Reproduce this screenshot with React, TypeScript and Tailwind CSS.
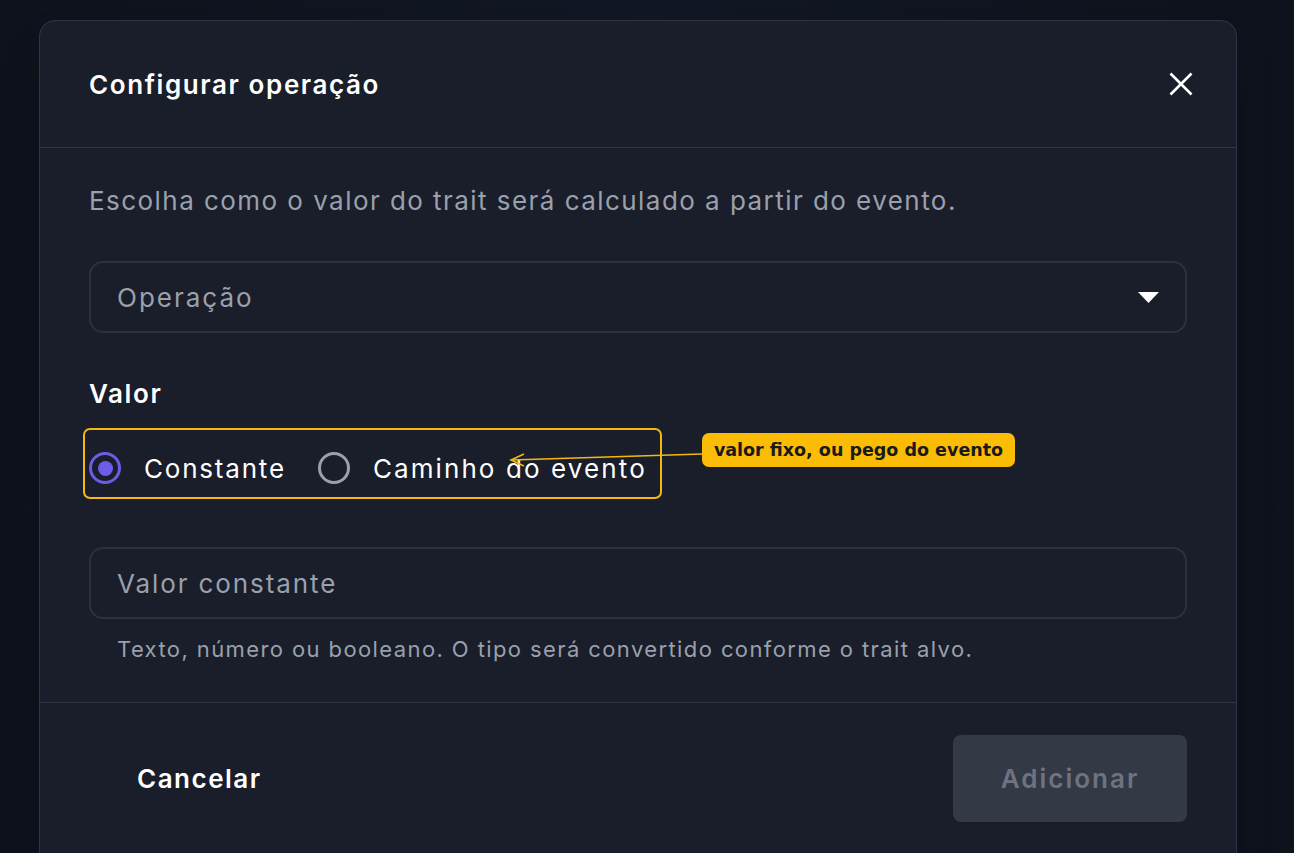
import { useState } from 'react';

const FONT = { fontFamily: 'Inter, "Open Sans", sans-serif' };

function Radio({ checked }: { checked: boolean }) {
  return checked ? (
    <span className="flex h-[32px] w-[32px] items-center justify-center rounded-full border-[3px] border-[#6c5ce7]">
      <span className="h-[15px] w-[15px] rounded-full bg-[#6c5ce7]" />
    </span>
  ) : (
    <span className="h-[32px] w-[32px] rounded-full border-[3px] border-[#9ca0ab]" />
  );
}

export default function App() {
  const [mode, setMode] = useState<'const' | 'path'>('const');

  return (
    <div
      className="relative h-[853px] w-full overflow-hidden bg-gradient-to-r from-[#0e121c] via-[#121725] to-[#0e121c]"
      style={FONT}
    >
      <div className="ml-[39px] mt-[20px] h-[860px] w-[1198px] rounded-[16px] border border-[#2f3544] bg-[#191e2a] shadow-2xl">
        {/* header */}
        <div className="flex h-[127px] items-center justify-between border-b border-[#2f3544] pl-[49px] pr-[43px]">
          <h2 className="text-[26px] font-semibold tracking-[1.6px] text-white">Configurar operação</h2>
          <button className="text-white">
            <svg width="24" height="24" viewBox="0 0 24 24" fill="none" stroke="currentColor" strokeWidth="2.6">
              <path d="M1.5 1.5l21 21M22.5 1.5l-21 21" />
            </svg>
          </button>
        </div>

        {/* body */}
        <div className="border-b border-[#2f3544] px-[49px] pb-[39px] pt-[37px]">
          <p className="text-[26px] leading-[32px] tracking-[1.45px] text-[#9aa0ac]">
            Escolha como o valor do trait será calculado a partir do evento.
          </p>

          <div className="mt-[44px] flex h-[72px] items-center justify-between rounded-[14px] border-2 border-[#2b3140] pl-[26px] pr-[26px]">
            <span className="text-[26px] tracking-[2px] text-[#9aa0ac]">Operação</span>
            <svg width="21" height="11" viewBox="0 0 21 11">
              <path d="M0 0h21l-10.5 11z" fill="white" />
            </svg>
          </div>

          <div className="mt-[45px] text-[26px] font-semibold leading-[32px] tracking-[1.6px] text-white">Valor</div>

          <div className="mt-[38px] flex h-[40px] items-center">
            <button className="flex items-center gap-[23px]" onClick={() => setMode('const')}>
              <Radio checked={mode === 'const'} />
              <span className="text-[26px] tracking-[1.8px] text-white">Constante</span>
            </button>
            <button className="ml-[32px] flex items-center gap-[23px]" onClick={() => setMode('path')}>
              <Radio checked={mode === 'path'} />
              <span className="text-[26px] tracking-[2.1px] text-white">Caminho do evento</span>
            </button>
          </div>

          <div className="mt-[59px] flex h-[72px] items-center rounded-[14px] border-2 border-[#2b3140] px-[26px]">
            <span className="text-[26px] tracking-[1.9px] text-[#9aa0ac]">Valor constante</span>
          </div>
          <p className="mt-[16px] pl-[28px] text-[22px] leading-[28px] tracking-[1.4px] text-[#9aa0ac]">
            Texto, número ou booleano. O tipo será convertido conforme o trait alvo.
          </p>
        </div>

        {/* footer */}
        <div className="flex items-start justify-between pl-[49px] pr-[49px] pt-[32px]">
          <button className="flex h-[87px] items-center px-[48px] text-[26px] font-semibold tracking-[1.5px] text-white">
            Cancelar
          </button>
          <button className="flex h-[87px] w-[234px] items-center justify-center rounded-[8px] bg-[#343946] text-[26px] font-semibold tracking-[2px] text-[#6e7382]">
            Adicionar
          </button>
        </div>
      </div>

      {/* annotation overlay */}
      <div className="pointer-events-none absolute left-[83px] top-[428px] h-[71px] w-[579px] rounded-[7px] border-2 border-[#f5b80c]" />
      <svg className="pointer-events-none absolute left-0 top-0" width="1294" height="853">
        <path d="M702 454 L512 460" stroke="#f5b80c" strokeWidth="1.6" fill="none" />
        <path d="M524 454 L511 460 L524 466" stroke="#f5b80c" strokeWidth="1.6" fill="none" />
      </svg>
      <div
        className="absolute left-[702px] top-[433px] flex h-[34px] w-[313px] items-center justify-center rounded-[7px] bg-[#fbbc05] text-[17.5px] font-bold text-[#1a1a1a]"
        style={{ fontFamily: '"DejaVu Sans", sans-serif' }}
      >
        valor fixo, ou pego do evento
      </div>
    </div>
  );
}
